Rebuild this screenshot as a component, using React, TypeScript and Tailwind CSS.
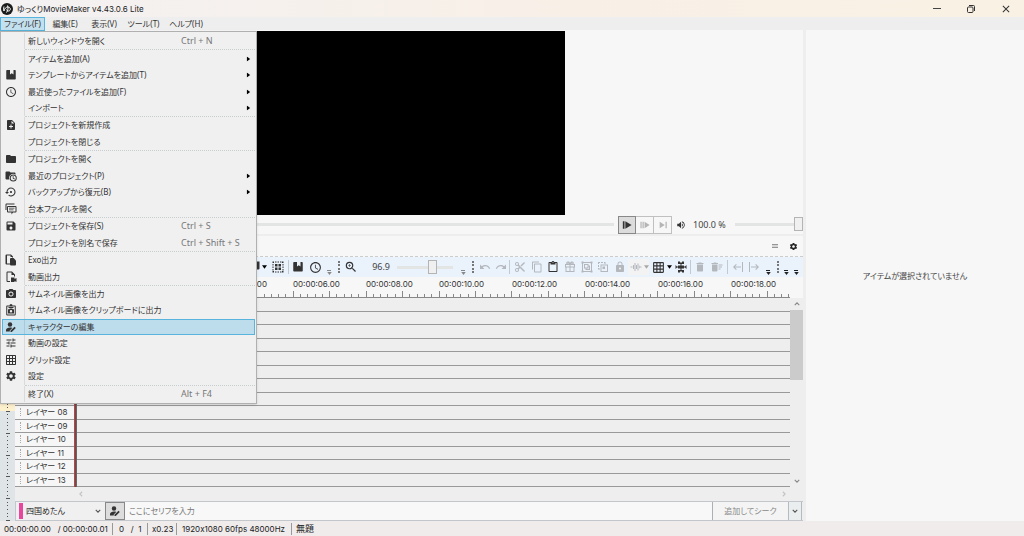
import type { ReactNode } from 'react';
import clsx from 'clsx';
import {
    MdAccessTime,
    MdClose,
    MdContentCopy,
    MdContentCut,
    MdContentPaste,
    MdDelete,
    MdFolder,
    MdGridOn,
    MdLock,
    MdMenu,
    MdNoteAdd,
    MdPhotoCamera,
    MdRedo,
    MdSave,
    MdSettings,
    MdSettingsBackupRestore,
    MdTune,
    MdUndo,
    MdVolumeUp,
    MdZoomIn,
} from 'react-icons/md';

type IconProps = { className?: string };

const Svg = ({ className, children }: IconProps & { children: ReactNode }) => (
    <svg viewBox="0 0 24 24" width="1em" height="1em" fill="currentColor" className={className} aria-hidden="true">
        {children}
    </svg>
);

const BookIcon = () => (
    <Svg>
        <path d="M4 2h6v9l3.500-2.500L17 11V2h3a1.500 1.500 0 0 1 1.500 1.500v16A1.500 1.500 0 0 1 20 21H4a1.500 1.500 0 0 1-1.500-1.500v-16A1.500 1.500 0 0 1 4 2z" />
    </Svg>
);

const FolderClockIcon = () => (
    <Svg>
        <path d="M9 3l2 2h8a2 2 0 0 1 2 2v2.300A8 8 0 0 0 9 19H3a2 2 0 0 1-2-2V5a2 2 0 0 1 2-2z" />
        <path fillRule="evenodd" d="M16.500 9a7 7 0 1 1 0 14 7 7 0 0 1 0-14zm0 2a5 5 0 1 0 0 10 5 5 0 0 0 0-10zM15.500 12H17v4l3 1.700-.8 1.300-3.700-2.200z" />
    </Svg>
);

const CommentsIcon = () => (
    <Svg>
        <path
            fillRule="evenodd"
            d="M6 6h15a2 2 0 0 1 2 2v9a2 2 0 0 1-2 2h-5l-3 4v-4H6a2 2 0 0 1-2-2V8a2 2 0 0 1 2-2zm0 2v9h15V8zm2 1.500h11V11H8zM8 13h9v1.500H8z"
        />
        <path d="M1 14V3a2 2 0 0 1 2-2h16v2H3v11z" />
    </Svg>
);

const ExoIcon = () => (
    <Svg>
        <path d="M3 1h9l4 4v2h-2V6h-3V3H4v16h6v2H3a2 2 0 0 1-2-2V3a2 2 0 0 1 2-2z" />
        <path d="M12 8h5l5 5v8a2 2 0 0 1-2 2h-8a2 2 0 0 1-2-2V10a2 2 0 0 1 2-2z" />
    </Svg>
);

const VideoFileIcon = () => (
    <Svg>
        <path d="M5 1h9l6 6v4h-2V8h-5V3H5v17h5v2H5a2 2 0 0 1-2-2V3a2 2 0 0 1 2-2z" />
        <path d="M12 13h7v3l4-2v8l-4-2v2h-7z" />
    </Svg>
);

const ClipboardCameraIcon = () => (
    <Svg>
        <path
            fillRule="evenodd"
            d="M4 3h5a3 3 0 0 1 6 0h5a1.500 1.500 0 0 1 1.500 1.500V21a2 2 0 0 1-2 2h-15a2 2 0 0 1-2-2V4.500A1.500 1.500 0 0 1 4 3zm.5 2v16h15V5zM7 6h10v2H7zM9.500 9h5l1 1.500H18V19H6v-8.500h2.500zM12 12a2.500 2.500 0 1 0 0 5 2.500 2.500 0 0 0 0-5z"
        />
    </Svg>
);

const CharacterIcon = () => (
    <Svg>
        <circle cx="10" cy="7" r="4.500" />
        <path d="M10 13c2 0 3.500.3 4.500.8L9.500 19v2H2v-3c0-3 4-5 8-5z" />
        <path d="M11 19.500l8-8 2.500 2.500-8 8H11z" />
    </Svg>
);

const GiftIcon = () => (
    <Svg>
        <path
            fillRule="evenodd"
            d="M6 1.500c3-1 5 0 6 2.500 1-2.500 3-3.500 6-2.500 2 1 2 3 1 4.500h3v7h-1v9H3v-9H2V6h3C4 4.500 4 2.500 6 1.500zM7 3v2h3zM17 3l-3 2h3zM4 8v3h7V8zm9 0v3h7V8zM5 13v7h6v-7zm8 0v7h6v-7z"
        />
    </Svg>
);

const CommentPlusIcon = () => (
    <Svg>
        <path d="M3 1h18v14a2 2 0 0 1-2 2h-4l-4 5v-3H5v-2h4v-3H3z" />
    </Svg>
);

const SelectAllIcon = () => (
    <Svg>
        <path d="M1 1h3v3H1zM6 1h3v2H6zM11 1h3v2h-3zM16 1h3v2h-3zM20 1h3v3h-3zM1 6h2v3H1zM1 11h2v3H1zM1 16h2v3H1zM1 20h3v3H1zM6 21h3v2H6zM11 21h3v2h-3zM16 21h3v2h-3zM20 20h3v3h-3zM21 6h2v3h-2zM21 11h2v3h-2zM21 16h2v3h-2zM6 6h5v5H6zM13 6h5v5h-5zM6 13h5v5H6zM13 13h5v5h-5z" />
    </Svg>
);

const GroupIcon = () => (
    <Svg>
        <path
            fillRule="evenodd"
            d="M1 1h4v1h14V1h4v4h-1v14h1v4h-4v-1H5v1H1v-4h1V5H1zm4 3v1H4v14h1v1h14v-1h1V5h-1V4zM6 6h9v3h3v9H9v-3H6zm2 2v5h5V8zm7 3v4h-4v1h5v-5z"
        />
    </Svg>
);

const UngroupIcon = () => (
    <Svg>
        <path
            fillRule="evenodd"
            d="M2 2h4v2H4v2H2zM8 2h4v2H8zM14 2h3v4h-2V4h-1zM2 8h2v4H2zM2 14h2v1h2v2H2zM7 7h15v15H7zm2 2v11h11V9zm2 2h5v5h-5z"
        />
    </Svg>
);

const WaveIcon = () => (
    <Svg>
        <path d="M1 11h4v2H1zM19 11h4v2h-4zM6 8h2v8H6zM9 4h2v16H9zM12 8h2v8h-2zM15 5h2v14h-2zM18 9h1v6h-1z" />
    </Svg>
);

const SnapIcon = () => (
    <Svg>
        <path
            fillRule="evenodd"
            d="M6 1h4v2h4V1h4v5h-5v3h5v2h2l3-3v8l-3-3h-2v2h-5v3h5v5h-4v-2h-4v2H6v-5h5v-3H6v-2H4l-3 3V8l3 3h2V9h5V6H6z"
        />
    </Svg>
);

const DeleteListIcon = () => (
    <Svg>
        <path d="M2 7h11v12a2 2 0 0 1-2 2H4a2 2 0 0 1-2-2zM1 4h4l1-1h4l1 1h3v2H1zM15 7h8v2h-8zM15 11h7v2h-7zM15 15h4v2h-4z" />
    </Svg>
);

const ArrowToBarIcon = ({ className }: IconProps) => (
    <Svg className={className}>
        <path d="M20 2h2v20h-2zM8 6l1.500 1.500L6 11h12v2H6l3.500 3.500L8 18l-6-6z" />
    </Svg>
);

const PlayFromIcon = () => (
    <Svg>
        <path d="M2 3h4v18H2zM8 3l15 9-15 9z" />
    </Svg>
);

const PlayRangeIcon = () => (
    <Svg>
        <path d="M1 4h3v16H1zM6 4h3v16H6zM11 4l12 8-12 8z" />
    </Svg>
);

const PlayToIcon = () => (
    <Svg>
        <path d="M4 4l12 8-12 8zM18 4h3v16h-3z" />
    </Svg>
);

const Caret = ({ className }: IconProps) => (
    <svg viewBox="0 0 6 4" className={clsx('h-1 w-[5px] shrink-0', className)} fill="currentColor" aria-hidden="true">
        <path d="M0 0h6L3 4z" />
    </svg>
);

const Chevron = ({ className }: IconProps) => (
    <svg viewBox="0 0 8 5" className={clsx('h-1 w-[6px]', className)} fill="none" stroke="currentColor" strokeWidth="1.500" aria-hidden="true">
        <path d="M1 1l3 3 3-3" />
    </svg>
);

type MenuEntry = {
    label: string;
    icon?: ReactNode;
    shortcut?: string;
    submenu?: boolean;
    selected?: boolean;
};

// null draws a separator line
const fileMenu: (MenuEntry | null)[] = [
    { label: '新しいウィンドウを開く', shortcut: 'Ctrl + N' },
    null,
    { label: 'アイテムを追加(A)', submenu: true },
    { label: 'テンプレートからアイテムを追加(T)', icon: <BookIcon />, submenu: true },
    { label: '最近使ったファイルを追加(F)', icon: <MdAccessTime />, submenu: true },
    { label: 'インポート', submenu: true },
    null,
    { label: 'プロジェクトを新規作成', icon: <MdNoteAdd /> },
    { label: 'プロジェクトを閉じる' },
    null,
    { label: 'プロジェクトを開く', icon: <MdFolder /> },
    { label: '最近のプロジェクト(P)', icon: <FolderClockIcon />, submenu: true },
    { label: 'バックアップから復元(B)', icon: <MdSettingsBackupRestore />, submenu: true },
    { label: '台本ファイルを開く', icon: <CommentsIcon /> },
    null,
    { label: 'プロジェクトを保存(S)', icon: <MdSave />, shortcut: 'Ctrl + S' },
    { label: 'プロジェクトを別名で保存', shortcut: 'Ctrl + Shift + S' },
    null,
    { label: 'Exo出力', icon: <ExoIcon /> },
    { label: '動画出力', icon: <VideoFileIcon /> },
    null,
    { label: 'サムネイル画像を出力', icon: <MdPhotoCamera /> },
    { label: 'サムネイル画像をクリップボードに出力', icon: <ClipboardCameraIcon /> },
    { label: 'キャラクターの編集', icon: <CharacterIcon />, selected: true },
    { label: '動画の設定', icon: <MdTune /> },
    { label: 'グリッド設定', icon: <MdGridOn /> },
    { label: '設定', icon: <MdSettings /> },
    null,
    { label: '終了(X)', shortcut: 'Alt + F4' },
];

// rows and times that lie under the open menu carry no label
const layers = Array.from({ length: 14 }, (_, i) => (i < 8 ? '' : `レイヤー ${String(i).padStart(2, '0')}`));
const timeLabels = Array.from({ length: 10 }, (_, i) => (i < 2 ? '' : `00:00:${String(i * 2).padStart(2, '0')}.00`));
const ticks = Array.from({ length: 99 }, (_, i) => i);

const TitleBar = () => (
    <header className="flex h-[17px] shrink-0 items-center bg-linear-to-r from-[#f3f1f2] via-[#f8f0e8] to-[#f9f1e3] pl-px">
        <svg viewBox="0 0 24 24" className="size-3 shrink-0" aria-hidden="true">
            <circle cx="12" cy="12" r="12" fill="#1c1c1c" />
            <path d="M6 7c-1 4-1 6 0 9 1-5 4-8 8-8 6 0 6 8 1 8-3 0-4-2-4-3M13 5c2 5 1 10-2 14" fill="none" stroke="#fff" strokeWidth="2" />
        </svg>
        <h1 className="ml-1 flex-1 font-['Inter','Noto_Sans_CJK_JP',sans-serif] text-[8px] text-[#222]">
            ゆっくりMovieMaker v4.43.0.6 Lite
        </h1>
        <div className="flex text-[#333]">
            <button type="button" aria-label="最小化" className="flex h-4 w-[34px] items-center justify-center">
                <span className="h-px w-2 bg-[#444]" />
            </button>
            <button type="button" aria-label="元のサイズに戻す" className="flex h-4 w-[34px] items-center justify-center">
                <svg viewBox="0 0 8 8" className="size-2" fill="none" stroke="currentColor" aria-hidden="true">
                    <rect x=".5" y="2" width="5.500" height="5.500" rx="1" />
                    <path d="M2 .5h4.500a1 1 0 0 1 1 1V6" />
                </svg>
            </button>
            <button type="button" aria-label="閉じる" className="flex h-4 w-9 items-center justify-center">
                <MdClose className="size-3" />
            </button>
        </div>
    </header>
);

const MenuBar = () => (
    <nav className="relative z-10 flex h-[13px] shrink-0 bg-[#eeeeee] text-[8px] leading-3 text-[#333]">
        <button type="button" className="-mb-px w-[45px] shrink-0 border border-[#58b4dd] bg-[#c3e0ee] whitespace-nowrap">
            ファイル(F)
        </button>
        <button type="button" className="w-10 shrink-0 whitespace-nowrap">編集(E)</button>
        <button type="button" className="w-[38px] shrink-0 whitespace-nowrap">表示(V)</button>
        <button type="button" className="w-[41px] shrink-0 whitespace-nowrap">ツール(T)</button>
        <button type="button" className="w-11 shrink-0 whitespace-nowrap">ヘルプ(H)</button>
    </nav>
);

const FileMenu = () => (
    <div
        role="menu"
        className="absolute top-[31px] left-0 z-20 flex h-[373px] w-[257px] flex-col border border-[#b0b0b0] bg-[#f0f0f0] p-px text-[8px] shadow-sm"
    >
        {fileMenu.map((entry, i) =>
            entry === null ? (
                <div key={i} role="separator" className="ml-[23px] h-px shrink-0 border-t border-dotted border-[#c6ced0]" />
            ) : (
                <button
                    key={i}
                    type="button"
                    role="menuitem"
                    className={clsx(
                        'flex min-h-0 flex-1 items-center text-left whitespace-nowrap text-[#333]',
                        entry.selected && 'bg-[#bddcec] outline -outline-offset-1 outline-[#58b4dd]',
                    )}
                >
                    <span className="flex w-[22px] justify-center pr-1 text-xs text-[#333]">{entry.icon}</span>
                    <span className={clsx('mr-[3px] w-px self-stretch', entry.selected ? 'bg-[#a9c9da]' : 'bg-[#dadada]')} />
                    <span className="w-[153px]">{entry.label}</span>
                    <span className="flex-1 text-[9px] text-[#777]">{entry.shortcut}</span>
                    {entry.submenu && <Caret className="mr-1 -rotate-90 text-black" />}
                </button>
            ),
        )}
    </div>
);

const sliderClass =
    'h-4 cursor-pointer appearance-none bg-transparent [&::-webkit-slider-runnable-track]:h-[3px] [&::-webkit-slider-runnable-track]:bg-[#e2e5e4] [&::-webkit-slider-thumb]:-mt-[6px] [&::-webkit-slider-thumb]:h-[14px] [&::-webkit-slider-thumb]:w-[9px] [&::-webkit-slider-thumb]:appearance-none [&::-webkit-slider-thumb]:border [&::-webkit-slider-thumb]:border-[#b4b4b4] [&::-webkit-slider-thumb]:bg-[#f0f0f0]';

const Preview = () => (
    <section className="shrink-0">
        <div className="flex h-[185px] justify-center pt-px">
            <div className="aspect-video h-full bg-black" />
        </div>
        <div className="flex h-[19px] items-center">
            <input
                type="range"
                aria-label="再生位置"
                defaultValue={0}
                className={clsx(sliderClass, 'mr-1 min-w-0 flex-1')}
            />
            <div className="flex text-[10px]">
                <button type="button" aria-label="再生" className="flex size-[18px] items-center justify-center border border-[#888] bg-[#dcdcdc] text-[#333]">
                    <PlayFromIcon />
                </button>
                <button type="button" aria-label="範囲再生" className="flex size-[18px] items-center justify-center border border-l-0 border-[#c0c0c0] text-[#b5b5b5]">
                    <PlayRangeIcon />
                </button>
                <button type="button" aria-label="末尾へ" className="flex size-[18px] items-center justify-center border border-l-0 border-[#c0c0c0] text-[#b5b5b5]">
                    <PlayToIcon />
                </button>
            </div>
            <MdVolumeUp className="ml-1 size-[10px] text-[#333]" />
            <span className="ml-[7px] w-[42px] text-[9px] text-[#444]">100.0 %</span>
            <input type="range" aria-label="音量" defaultValue={100} className={clsx(sliderClass, 'w-[68px]')} />
        </div>
    </section>
);

type ToolProps = { label: string; width?: string; disabled?: boolean; children: ReactNode };

const Tool = ({ label, width = 'w-4', disabled, children }: ToolProps) => (
    <button
        type="button"
        aria-label={label}
        disabled={disabled}
        className={clsx('flex h-full shrink-0 items-center justify-center', width, disabled ? 'text-[#b4b8bd]' : 'text-[#333]')}
    >
        {children}
    </button>
);

const Overflow = ({ width = 'w-3', muted }: { width?: string; muted?: boolean }) => (
    <button
        type="button"
        aria-label="その他"
        className={clsx(
            'flex h-full shrink-0 flex-col items-center justify-end gap-px pb-[2px]',
            width,
            muted ? 'text-[#888]' : 'text-[#222]',
        )}
    >
        <span className="h-px w-1 bg-current" />
        <Caret className="h-[3px]" />
    </button>
);

const Grip = () => (
    <span className="flex w-2 shrink-0 justify-center">
        <span className="h-3 border-l-2 border-dotted border-[#777]" />
    </span>
);

const Separator = ({ className }: IconProps) => <span className={clsx('h-[14px] w-px shrink-0 bg-[#c3c9d0]', className)} />;

const Toolbar = () => (
    <div className="flex h-5 shrink-0 items-center bg-[#eaf2fc] pl-[248px] text-xs">
        <Tool label="追加" width="w-[14px]"><CommentPlusIcon /></Tool>
        <Caret />
        <Tool label="すべて選択" width="w-[21px]"><SelectAllIcon /></Tool>
        <Separator />
        <Tool label="テンプレート" width="w-[18px]"><BookIcon /></Tool>
        <Tool label="履歴"><MdAccessTime className="size-[13px] shrink-0" /></Tool>
        <Overflow muted />
        <Grip />
        <Tool label="拡大"><MdZoomIn className="size-[14px] shrink-0" /></Tool>
        <span className="w-[34px] shrink-0 pr-[3px] text-right text-[9px] text-[#444]">96.9</span>
        <input type="range" aria-label="ズーム" defaultValue={66} className={clsx(sliderClass, 'mx-1 w-14 shrink-0')} />
        <Overflow muted />
        <Grip />
        <Tool label="元に戻す" disabled><MdUndo /></Tool>
        <Tool label="やり直し" disabled><MdRedo /></Tool>
        <Separator className="mr-[2px]" />
        <div className="grid h-full w-[116px] shrink-0 grid-cols-7">
            <Tool label="切り取り" width="w-full" disabled><MdContentCut /></Tool>
            <Tool label="コピー" width="w-full" disabled><MdContentCopy /></Tool>
            <Tool label="貼り付け" width="w-full"><MdContentPaste /></Tool>
            <Tool label="複製" width="w-full" disabled><GiftIcon /></Tool>
            <Tool label="グループ化" width="w-full" disabled><GroupIcon /></Tool>
            <Tool label="グループ解除" width="w-full" disabled><UngroupIcon /></Tool>
            <Tool label="ロック" width="w-full" disabled><MdLock /></Tool>
        </div>
        <div className="flex h-4 shrink-0 items-center bg-[#f3f3f3]">
            <Tool label="波形" disabled><WaveIcon /></Tool>
            <Caret className="text-[#a8a8a8]" />
        </div>
        <Tool label="グリッド" width="w-[18px]"><MdGridOn className="size-[13px] shrink-0" /></Tool>
        <Caret />
        <Tool label="スナップ" width="w-[18px]"><SnapIcon /></Tool>
        <Separator />
        <Tool label="削除" width="w-[18px]" disabled><MdDelete /></Tool>
        <Tool label="詰めて削除" disabled><DeleteListIcon /></Tool>
        <Separator className="mx-[2px]" />
        <Tool label="左へ" disabled><ArrowToBarIcon /></Tool>
        <Tool label="右へ" disabled><ArrowToBarIcon className="rotate-180" /></Tool>
        <Overflow />
        <Grip />
        <Overflow width="w-2" />
        <Overflow />
    </div>
);

const Ruler = () => (
    <div className="mr-[13px] ml-[74px] h-[21px] shrink-0 overflow-hidden border-b border-[#888]">
        <div className="flex h-[13px] font-['Inter',sans-serif] text-[8px] leading-[14px] text-[#333]">
            {timeLabels.map((label, i) => (
                <span key={i} className="w-[73px] shrink-0">{label}</span>
            ))}
        </div>
        <svg className="h-[7px] w-full" aria-hidden="true">
            {ticks.map((i) => (
                <rect key={i} x={Math.round(i * 7.29)} y={i % 5 === 0 ? 1 : 4} width="1" height="6" fill="#888" />
            ))}
        </svg>
    </div>
);

const LevelMeter = () => (
    <svg className="w-[15px] shrink-0 bg-[#dfe4e6]" aria-hidden="true">
        <rect width="15" height="113" fill="#fdf0cd" />
        {Array.from({ length: 62 }, (_, i) => (
            <rect
                key={i}
                x={i % 6 === 1 ? 6 : 7}
                y={Math.round(i * 3.640)}
                width={i % 6 === 1 ? 4 : 1}
                height="1"
                fill="#555"
            />
        ))}
    </svg>
);

const Timeline = () => (
    <section className="flex min-h-0 flex-1">
        <LevelMeter />
        <div className="flex min-w-0 flex-1 flex-col bg-[#eeeeee]">
            <div className="flex min-h-0 flex-1">
                <div className="relative flex min-w-0 flex-1 flex-col">
                    {layers.map((name, i) => (
                        <div key={i} className="flex min-h-0 flex-1 border-b border-[#999]">
                            <div className="flex w-[60px] shrink-0 items-center bg-[#f6f6f6] font-['Inter','Noto_Sans_CJK_JP',sans-serif] text-[8px] text-[#333]">
                                <span className="mx-[5px] h-2 border-l border-dotted border-[#aaa]" />
                                <span className="whitespace-nowrap">{name}</span>
                            </div>
                        </div>
                    ))}
                    <div className="absolute inset-y-0 left-[59px] w-[3px] border-x border-[#666] bg-[#c0282c]" />
                </div>
                <div className="flex w-[13px] shrink-0 flex-col items-center text-[#888]">
                    <span className="flex h-3 items-center"><Chevron className="rotate-180" /></span>
                    <span className="h-[70px] w-full bg-[#cbcbcb]" />
                    <span className="mt-auto flex h-3 items-center"><Chevron /></span>
                </div>
            </div>
            <div className="flex h-[14px] shrink-0 items-center justify-between pr-4 pl-[63px] text-[#c4c4c4]">
                <Chevron className="rotate-90" />
                <Chevron className="-rotate-90" />
            </div>
            <form className="flex h-5 shrink-0 border-y border-[#c3c7cb] text-[8px]">
                <div className="relative flex w-[90px] shrink-0 items-center border-l border-[#c3c7cb] bg-[#f0f0f0]">
                    <span className="ml-[3px] h-4 w-1 shrink-0 bg-[#e8489c]" />
                    <select aria-label="キャラクター" className="h-full min-w-0 flex-1 appearance-none pl-[3px] text-[#222]">
                        <option>四国めたん</option>
                    </select>
                    <Chevron className="pointer-events-none absolute right-1 text-[#555]" />
                </div>
                <button type="button" aria-label="キャラクターの編集" className="flex w-5 shrink-0 items-center justify-center border border-[#888] bg-[#dddddd] text-xs text-[#333]">
                    <CharacterIcon />
                </button>
                <input aria-label="セリフ" placeholder="ここにセリフを入力" className="min-w-0 flex-1 bg-[#f8f8f8] px-1 placeholder:text-[#777]" />
                <button type="button" className="w-[76px] shrink-0 border-l border-[#aab0b5] bg-[#f4f4f4] text-[#888]">追加してシーク</button>
                <button type="button" aria-label="追加方法" className="mr-px flex w-[14px] shrink-0 items-center justify-center border-x border-[#b4babf] bg-[#ebeeef] text-[#555]">
                    <Chevron />
                </button>
            </form>
        </div>
    </section>
);

const StatusBar = () => (
    <footer className="flex h-[15px] shrink-0 items-center bg-[#f0ecec] pt-px pl-1 font-['Inter','Noto_Sans_CJK_JP',sans-serif] text-[8px] text-[#222] [font-feature-settings:'palt','calt'_0]">
        <span className="w-[109px] border-r border-[#999] whitespace-pre">00:00:00.00   / 00:00:00.01</span>
        <span className="w-[35px] border-r border-[#999] pl-[6px] whitespace-pre">0   /  1</span>
        <span className="w-[29px] border-r border-[#999] pl-1">x0.23</span>
        <span className="w-[115px] border-r border-[#999] pl-[5px] whitespace-nowrap">1920x1080 60fps 48000Hz</span>
        <span className="pl-1 text-[9px]">無題</span>
    </footer>
);

const App = () => (
    <div
        lang="ja"
        className="relative flex h-screen flex-col overflow-hidden bg-[#eeeeee] font-['Noto_Sans','Noto_Sans_CJK_JP',sans-serif] [font-feature-settings:'palt']"
    >
        <TitleBar />
        <MenuBar />
        <FileMenu />
        <main className="flex min-h-0 flex-1">
            <div className="flex min-w-0 flex-1 flex-col bg-[#f7f7f7]">
                <Preview />
                <div className="flex h-[23px] shrink-0 items-center justify-end gap-[10px] border-t-2 border-b border-t-[#eeeeee] border-b-[#cccccc] [border-bottom-style:dashed] pr-[5px] text-[9px]">
                    <button type="button" aria-label="メニュー" className="text-[#777]"><MdMenu className="size-2" /></button>
                    <button type="button" aria-label="タイムラインの設定" className="text-[#222]"><MdSettings /></button>
                </div>
                <Toolbar />
                <Ruler />
                <Timeline />
            </div>
            <aside className="ml-[3px] flex w-[218px] shrink-0 items-center justify-center bg-[#f7f7f7] text-[8px] text-[#444]">
                アイテムが選択されていません
            </aside>
        </main>
        <StatusBar />
    </div>
);

export default App;
